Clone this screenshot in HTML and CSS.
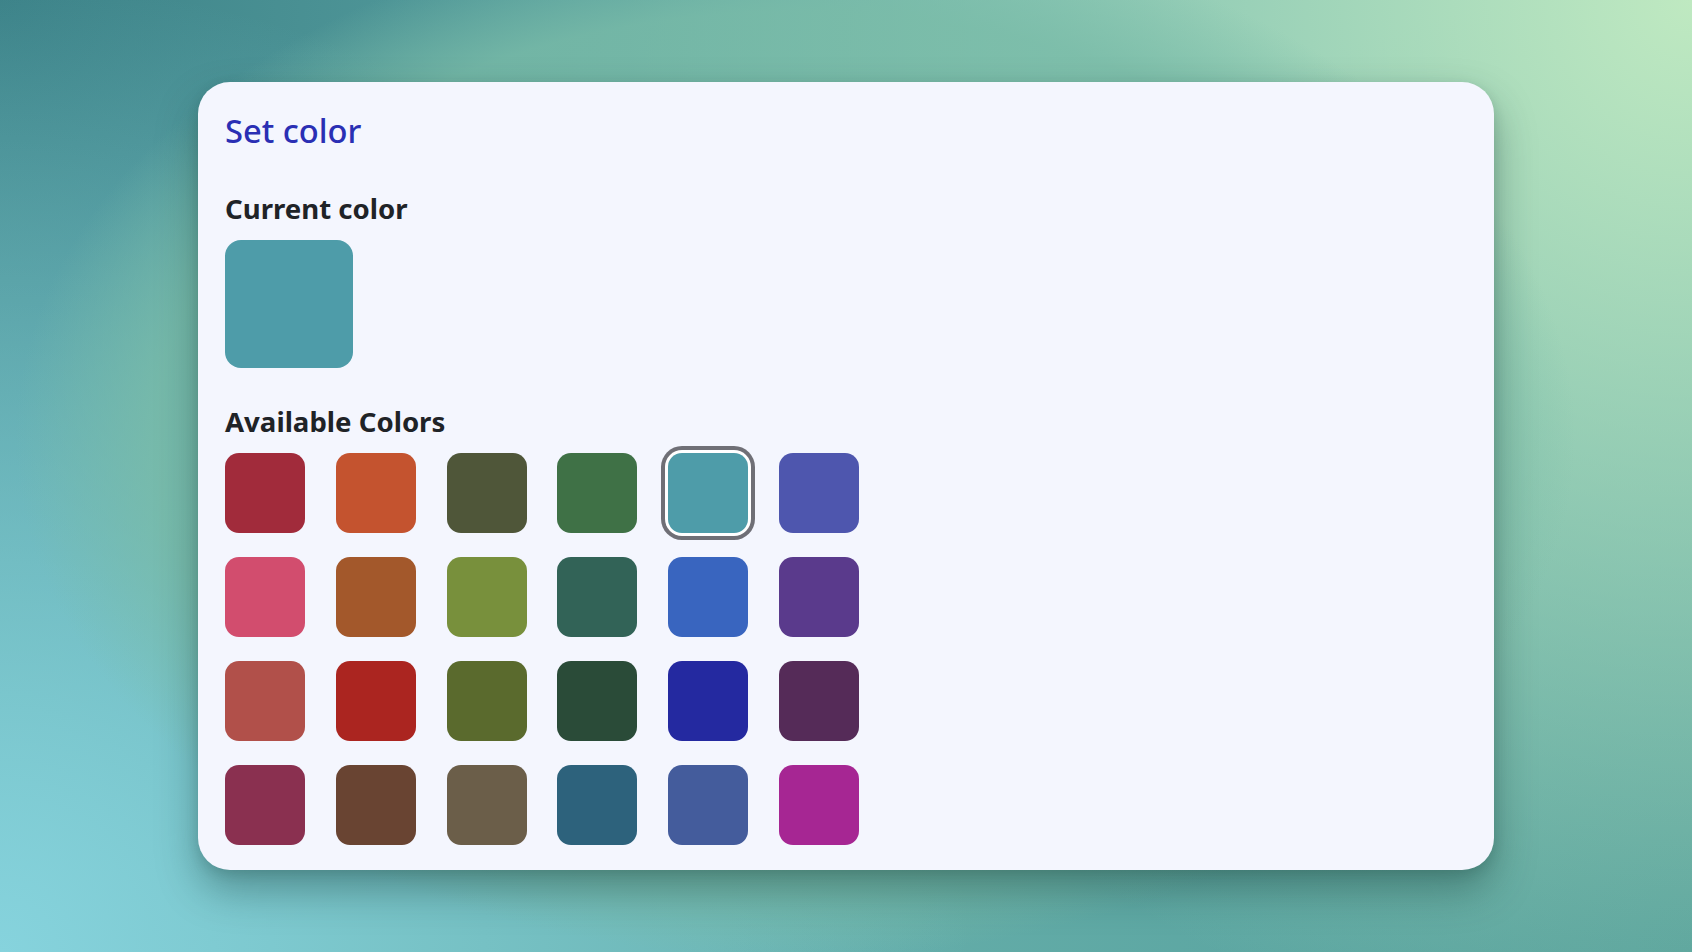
FILE: index.html
```html
<!DOCTYPE html>
<html lang="en">
<head>
<meta charset="utf-8">
<title>Set color</title>
<link rel="stylesheet" href="styles.css">
</head>
<body>
<main class="card">
  <h1 class="title">Set color</h1>
  <h2 class="heading heading-current">Current color</h2>
  <div class="current-swatch"></div>
  <h2 class="heading heading-available">Available Colors</h2>
  <div class="palette">
    <button class="swatch c1"></button>
    <button class="swatch c2"></button>
    <button class="swatch c3"></button>
    <button class="swatch c4"></button>
    <button class="swatch c5 selected"></button>
    <button class="swatch c6"></button>
    <button class="swatch c7"></button>
    <button class="swatch c8"></button>
    <button class="swatch c9"></button>
    <button class="swatch c10"></button>
    <button class="swatch c11"></button>
    <button class="swatch c12"></button>
    <button class="swatch c13"></button>
    <button class="swatch c14"></button>
    <button class="swatch c15"></button>
    <button class="swatch c16"></button>
    <button class="swatch c17"></button>
    <button class="swatch c18"></button>
    <button class="swatch c19"></button>
    <button class="swatch c20"></button>
    <button class="swatch c21"></button>
    <button class="swatch c22"></button>
    <button class="swatch c23"></button>
    <button class="swatch c24"></button>
  </div>
</main>
</body>
</html>
```

FILE: styles.css
```css
html, body {
  margin: 0;
  height: 100%;
}

body {
  font-family: "Noto Sans", "Open Sans", sans-serif;
  display: flex;
  align-items: center;
  justify-content: center;
  background:
    radial-gradient(ellipse 780px 520px at 47% 46%, rgba(122, 188, 168, 0.9) 0%, rgba(122, 188, 168, 0.8) 82%, rgba(122, 188, 168, 0) 100%),
    radial-gradient(circle at 100% 0%, #bfe9c1 0%, rgba(191, 233, 193, 0) 55%),
    radial-gradient(circle at 0% 100%, #86d3dd 0%, rgba(134, 211, 221, 0) 50%),
    radial-gradient(circle at 0% 0%, #3c8288 0%, rgba(60, 130, 136, 0) 50%),
    radial-gradient(circle at 100% 100%, #55a09b 0%, rgba(85, 160, 155, 0) 50%),
    #66afab;
}

.card {
  box-sizing: border-box;
  width: 1296px;
  height: 788px;
  padding: 26px 27px 25px;
  background: #f4f6fe;
  border-radius: 32px;
  box-shadow: 0 20px 40px rgba(20, 60, 55, 0.4), 0 4px 12px rgba(20, 60, 55, 0.15);
}

.title {
  margin: 0 0 35px;
  font-size: 32.7px;
  line-height: 46px;
  font-weight: 500;
  color: #2a2fb4;
}

.heading {
  margin: 0 0 13px;
  font-size: 27.6px;
  line-height: 38px;
  font-weight: 700;
  color: #1f2327;
}

.heading-available {
  margin-top: 34px;
}

.current-swatch {
  width: 128px;
  height: 128px;
  border-radius: 16px;
  background: #4e9ca9;
}

.palette {
  display: grid;
  grid-template-columns: repeat(6, 80px);
  column-gap: 30.8px;
  row-gap: 24px;
}

.swatch {
  width: 80px;
  height: 80px;
  padding: 0;
  border: 0;
  border-radius: 14px;
  cursor: pointer;
}

.swatch.selected {
  box-shadow: 0 0 0 3px #ffffff, 0 0 0 7px #6f6f76;
}

.c1 { background: #a12b3b; }
.c2 { background: #c4532f; }
.c3 { background: #4f5639; }
.c4 { background: #3f7146; }
.c5 { background: #4e9ca9; }
.c6 { background: #4e56ae; }
.c7 { background: #d24d6e; }
.c8 { background: #a3582b; }
.c9 { background: #78903c; }
.c10 { background: #326357; }
.c11 { background: #3965bf; }
.c12 { background: #5a3a8c; }
.c13 { background: #b1504a; }
.c14 { background: #ab2520; }
.c15 { background: #5a6a2d; }
.c16 { background: #2a4b38; }
.c17 { background: #2429a0; }
.c18 { background: #552b58; }
.c19 { background: #8a3050; }
.c20 { background: #694432; }
.c21 { background: #6b5e49; }
.c22 { background: #2d627c; }
.c23 { background: #445c9c; }
.c24 { background: #a62693; }
```
